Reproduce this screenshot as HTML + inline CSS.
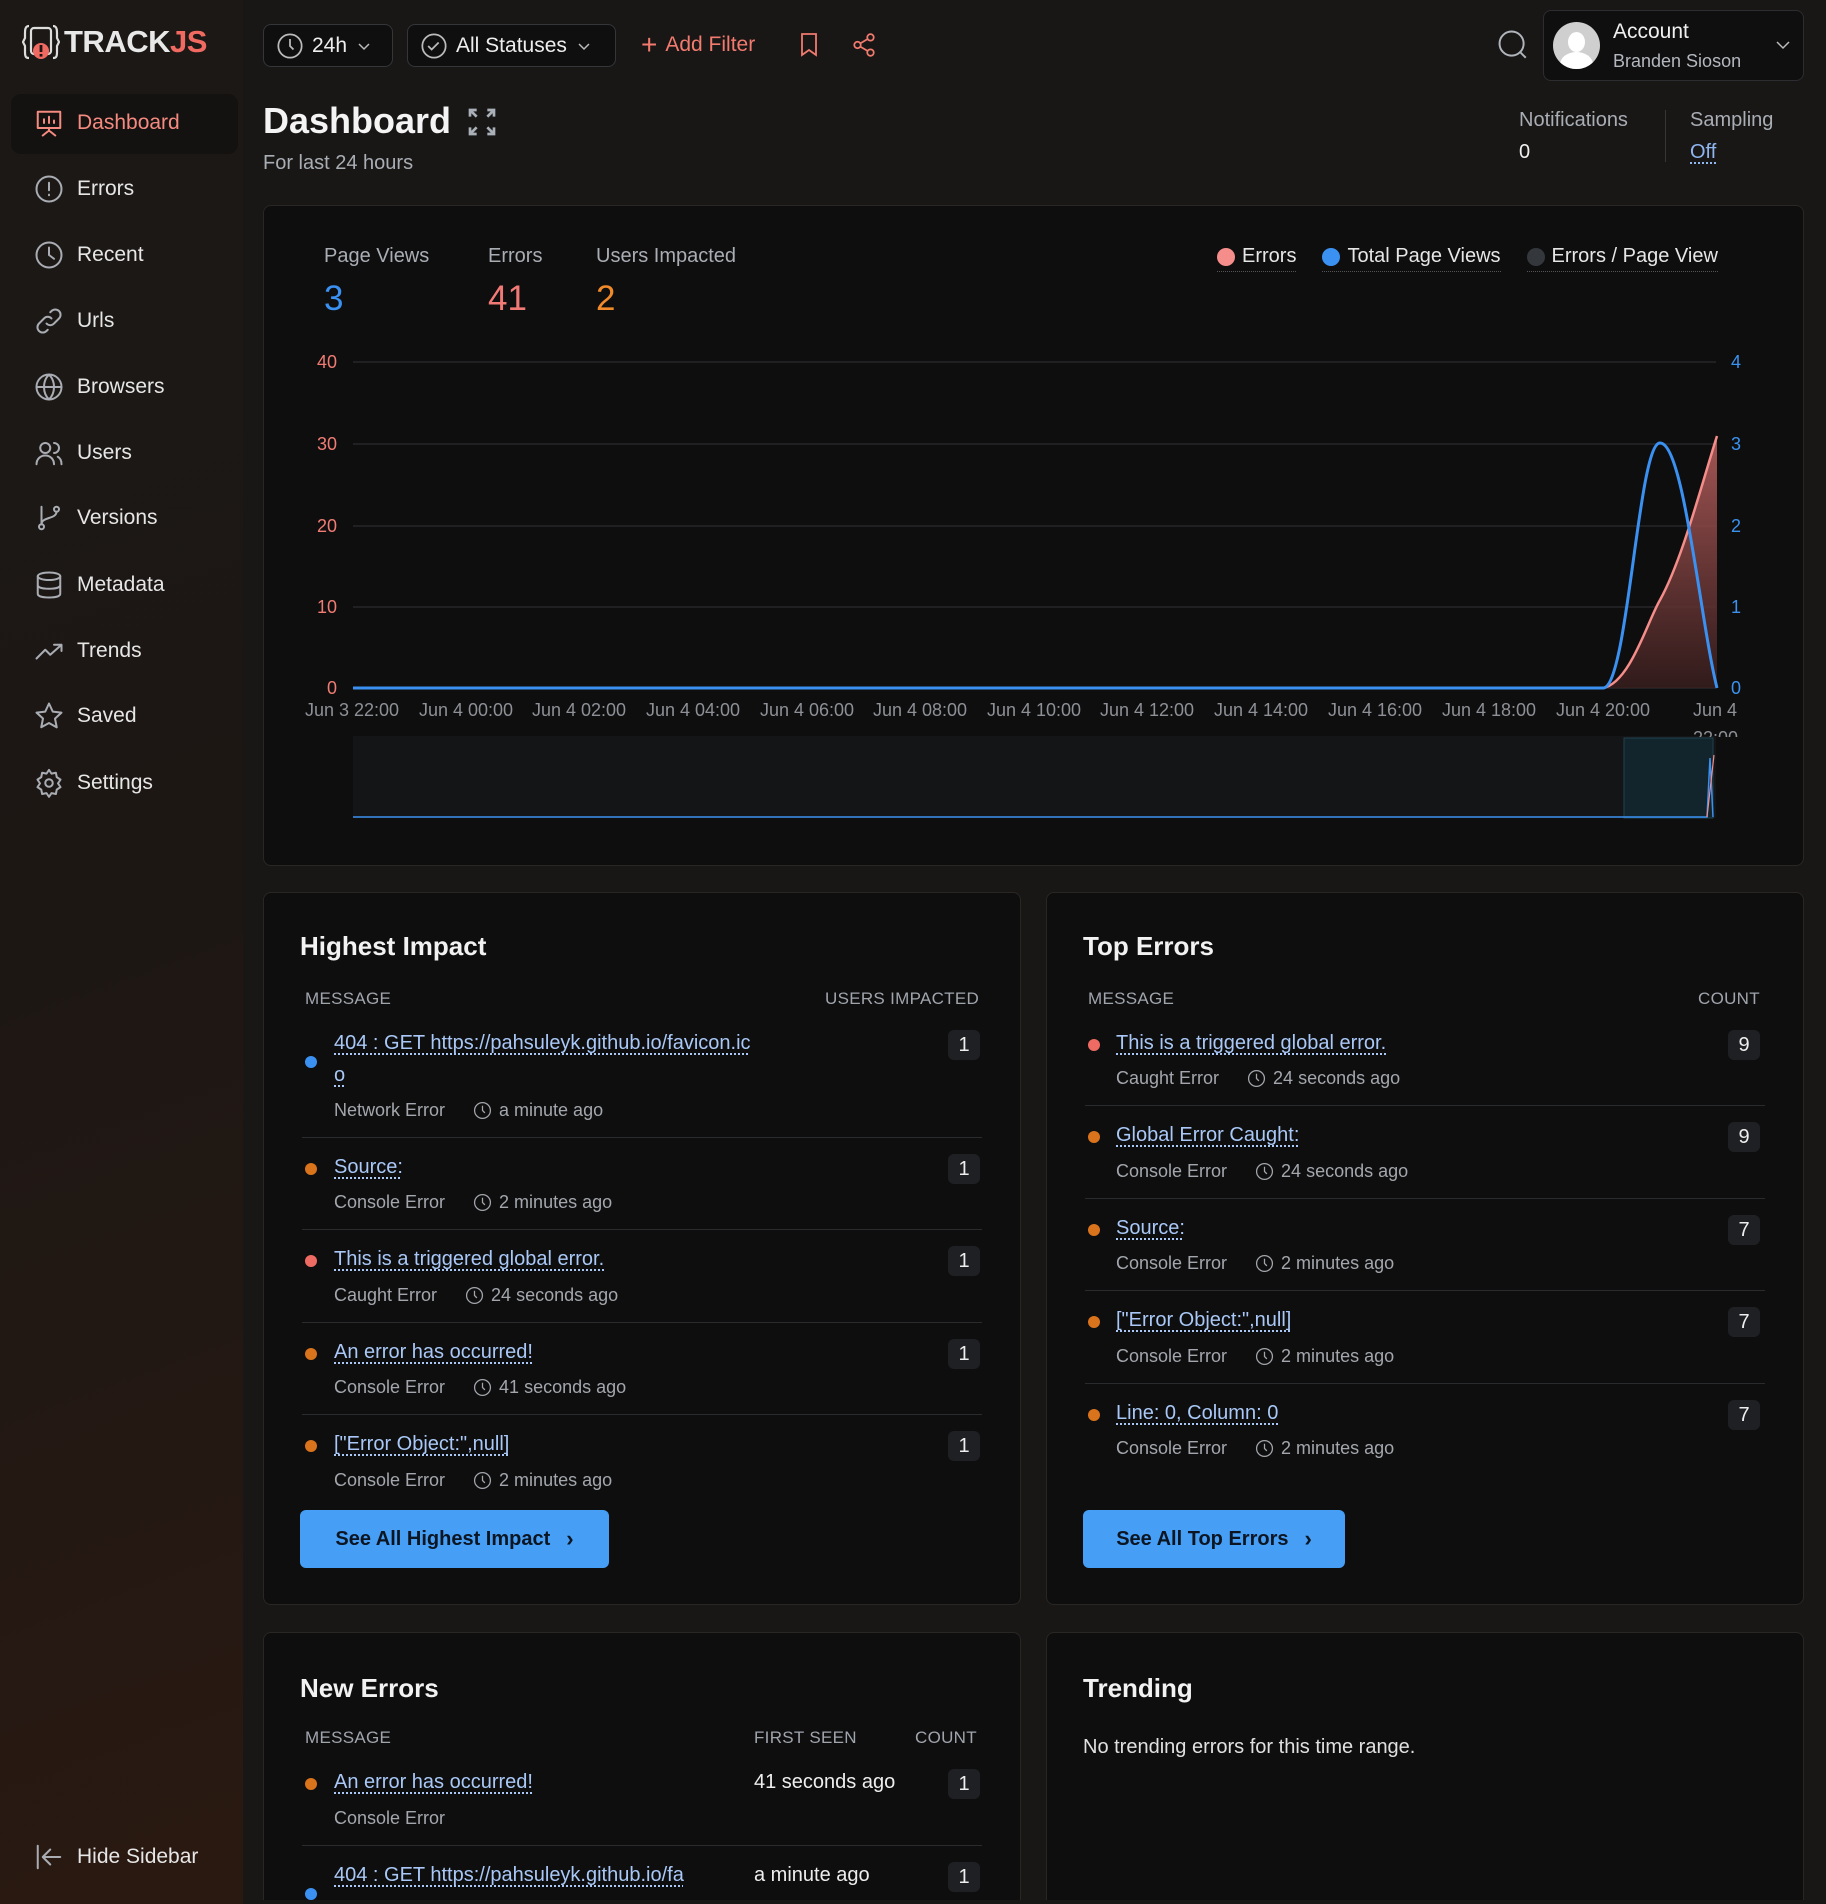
<!DOCTYPE html>
<html style="width:1826px;height:1904px;overflow:hidden"><head><meta charset="utf-8"><style>
*{box-sizing:border-box;margin:0;padding:0}
body{width:1826px;height:1904px;overflow:hidden;background:#181716;font-family:"Liberation Sans",sans-serif;color:#e8e8e8;position:relative}
.a{position:absolute}
.side{left:0;top:0;width:243px;height:1904px;background:linear-gradient(160deg,#1b1816 0%,#1d1714 50%,#2a1911 100%)}
.nav{position:absolute;left:34px;font-size:21px;color:#e6e6e6;display:flex;align-items:center;height:30px}
.nav svg{width:30px;height:30px;margin-right:13px;fill:none;stroke:#a9adb3;stroke-width:1.6;stroke-linecap:round;stroke-linejoin:round}
.btn{border:1px solid #34363a;background:#0f0f10;border-radius:8px;height:43px;display:flex;align-items:center;padding:0 12px;font-size:21px;color:#eee}
.card{background:#0e0e0e;border:1px solid #2a2623;border-radius:8px}
.h{font-size:26px;font-weight:bold;color:#f2f2f2}
.th{font-size:17px;color:#a0a5ad;letter-spacing:.3px}
.t{font-size:20px;color:#a9c8f7;text-decoration:underline dotted #a9c8f7;text-underline-offset:4px;white-space:nowrap}
.m{font-size:18px;color:#a3a7ad;white-space:nowrap;display:flex;align-items:center}
.m svg{width:19px;height:19px;margin:0 7px 0 28px;fill:none;stroke:#a3a7ad;stroke-width:1.6}
.dot{width:12px;height:12px;border-radius:50%}
.b{width:32px;height:30px;background:#1f2023;border-radius:6px;font-size:20px;color:#eee;text-align:center;line-height:30px}
.sep{height:1px;background:#2a2b2e}
.cta{background:#469ef5;color:#0c1622;font-weight:bold;font-size:20px;border-radius:6px;height:58px;display:flex;align-items:center;justify-content:center}
.yl{font-size:18px;color:#f07c74;text-align:right;width:40px}
.yr{font-size:18px;color:#3c92ef}
.xl{font-size:18px;color:#8d9096;width:120px;text-align:center;white-space:nowrap}
</style></head><body>
<div class="a side"></div>
<div class="a" style="left:22px;top:22px;display:flex;align-items:center">
<svg width="38" height="40" viewBox="0 0 38 40"><path d="M7 4 C3 4 3 8 3 12 L3 16 L1 20 L3 24 L3 30 C3 35 4 36 7 36 M31 4 C35 4 35 8 35 12 L35 16 L37 20 L35 24 L35 30 C35 35 34 36 31 36" fill="none" stroke="#ddd" stroke-width="2.2"/><rect x="9" y="6" width="20" height="26" rx="3" fill="none" stroke="#ddd" stroke-width="2.2"/><circle cx="19" cy="29" r="8" fill="#f16a62"/><rect x="17.6" y="23" width="2.8" height="7" fill="#1a1614"/><rect x="17.6" y="32" width="2.8" height="2.6" fill="#1a1614"/></svg>
<span style="font-size:31px;font-weight:bold;color:#e8e8e8;margin-left:4px;letter-spacing:-.5px">TRACK<span style="color:#f16a62">JS</span></span></div>
<div class="a" style="left:11px;top:94px;width:227px;height:60px;background:#141210;border-radius:10px"></div>
<div class="nav" style="top:108px;color:#f58a80"><svg viewBox="0 0 24 24" style="stroke:#f58a80"><rect x="3" y="3" width="18" height="13"/><path d="M8 12V9M12 12V7M16 12V10M12 16v2M7 22l5-4 5 4"/></svg>Dashboard</div>
<div class="nav" style="top:174px"><svg viewBox="0 0 24 24"><circle cx="12" cy="12" r="10"/><path d="M12 7v6M12 16.5v.5"/></svg>Errors</div>
<div class="nav" style="top:240px"><svg viewBox="0 0 24 24"><circle cx="12" cy="12" r="10"/><path d="M12 6v6l4 3"/></svg>Recent</div>
<div class="nav" style="top:306px"><svg viewBox="0 0 24 24"><path d="M10 14a4 4 0 0 0 6 0l4-4a4 4 0 0 0-6-6l-1 1M14 10a4 4 0 0 0-6 0l-4 4a4 4 0 0 0 6 6l1-1"/></svg>Urls</div>
<div class="nav" style="top:372px"><svg viewBox="0 0 24 24"><circle cx="12" cy="12" r="10"/><path d="M2 12h20M12 2c3 3 4 6 4 10s-1 7-4 10c-3-3-4-6-4-10s1-7 4-10"/></svg>Browsers</div>
<div class="nav" style="top:438px"><svg viewBox="0 0 24 24"><circle cx="9" cy="8" r="4"/><path d="M2 21c0-4 3-7 7-7s7 3 7 7M16 4a4 4 0 0 1 0 8M19 15c2 1 3 3 3 6"/></svg>Users</div>
<div class="nav" style="top:503px"><svg viewBox="0 0 24 24"><circle cx="6" cy="19" r="2"/><circle cx="18" cy="5" r="2"/><path d="M6 3v14M18 7c0 6-12 4-12 10"/></svg>Versions</div>
<div class="nav" style="top:570px"><svg viewBox="0 0 24 24"><ellipse cx="12" cy="5" rx="9" ry="3"/><path d="M3 5v14c0 2 4 3 9 3s9-1 9-3V5M3 12c0 2 4 3 9 3s9-1 9-3"/></svg>Metadata</div>
<div class="nav" style="top:636px"><svg viewBox="0 0 24 24"><path d="M2 18l7-7 4 4 9-8M16 7h6v5"/></svg>Trends</div>
<div class="nav" style="top:701px"><svg viewBox="0 0 24 24"><path d="M12 2l3 6.5 7 .8-5.2 4.8 1.4 7L12 17.6 5.8 21l1.4-7L2 9.3l7-.8z"/></svg>Saved</div>
<div class="nav" style="top:768px"><svg viewBox="0 0 24 24"><circle cx="12" cy="12" r="3"/><path d="M12 1.5l2 3 3.5-.7.7 3.5 3 2-2 3 2 3-3 2-.7 3.5-3.5-.7-2 3-2-3-3.5.7-.7-3.5-3-2 2-3-2-3 3-2 .7-3.5 3.5.7z"/></svg>Settings</div>
<div class="nav" style="top:1842px"><svg viewBox="0 0 24 24"><path d="M3 3v18M21 12H8M13 6l-6 6 6 6"/></svg>Hide Sidebar</div>

<div class="a btn" style="left:263px;top:24px;width:130px"><svg width="28" height="28" viewBox="0 0 24 24" fill="none" stroke="#bbb" stroke-width="1.5"><circle cx="12" cy="12" r="10"/><path d="M12 6v6l3 3"/></svg><span style="margin:0 10px 0 8px">24h</span><svg width="14" height="14" viewBox="0 0 14 14" fill="none" stroke="#bbb" stroke-width="1.5"><path d="M2 5l5 5 5-5"/></svg></div>
<div class="a btn" style="left:407px;top:24px;width:209px"><svg width="28" height="28" viewBox="0 0 24 24" fill="none" stroke="#bbb" stroke-width="1.5"><circle cx="12" cy="12" r="10"/><path d="M7 12l3 3 6-6"/></svg><span style="margin:0 10px 0 8px">All Statuses</span><svg width="14" height="14" viewBox="0 0 14 14" fill="none" stroke="#bbb" stroke-width="1.5"><path d="M2 5l5 5 5-5"/></svg></div>
<div class="a" style="left:641px;top:33px;font-size:21px;color:#f27a6e;display:flex;align-items:center"><span style="font-size:28px;margin-right:8px;line-height:20px">+</span>Add Filter</div>
<svg class="a" style="left:798px;top:32px" width="22" height="26" viewBox="0 0 22 26" fill="none" stroke="#f27a6e" stroke-width="1.8"><path d="M4 2h14v21l-7-5-7 5z"/></svg>
<svg class="a" style="left:851px;top:32px" width="26" height="26" viewBox="0 0 24 24" fill="none" stroke="#f27a6e" stroke-width="1.6"><circle cx="18" cy="5" r="3"/><circle cx="6" cy="12" r="3"/><circle cx="18" cy="19" r="3"/><path d="M8.6 13.5l6.8 4M15.4 6.5l-6.8 4"/></svg>
<svg class="a" style="left:1496px;top:28px" width="34" height="34" viewBox="0 0 24 24" fill="none" stroke="#b0b5bc" stroke-width="1.4"><circle cx="11" cy="11" r="8.5"/><path d="M17 17l4 4"/></svg>
<div class="a" style="left:1543px;top:10px;width:261px;height:71px;background:#0f0f10;border:1px solid #2c2d30;border-radius:8px"></div>
<div class="a" style="left:1553px;top:22px;width:47px;height:47px;border-radius:50%;background:#cfcfcf;overflow:hidden"><div class="a" style="left:15px;top:10px;width:17px;height:20px;border-radius:50%;background:#fff"></div><div class="a" style="left:7px;top:30px;width:33px;height:25px;border-radius:50% 50% 0 0;background:#fff"></div></div>
<div class="a" style="left:1613px;top:20px;font-size:21px;color:#f0f0f0">Account</div>
<div class="a" style="left:1613px;top:51px;font-size:18px;color:#b4b8be">Branden Sioson</div>
<svg class="a" style="left:1775px;top:38px" width="16" height="14" viewBox="0 0 16 14" fill="none" stroke="#bbb" stroke-width="1.5"><path d="M2 4l6 6 6-6"/></svg>

<div class="a" style="left:263px;top:100px;font-size:36px;font-weight:bold;color:#f4f4f4">Dashboard</div>
<svg class="a" style="left:466px;top:106px" width="32" height="32" viewBox="0 0 24 24" fill="none" stroke="#aab0b8" stroke-width="2"><path d="M3 8V3h5M3 3l5 5M21 8V3h-5M21 3l-5 5M3 16v5h5M3 21l5-5M21 16v5h-5M21 21l-5-5"/></svg>
<div class="a" style="left:263px;top:152px;font-size:20px;color:#a9adb4">For last 24 hours</div>
<div class="a" style="left:1519px;top:109px;font-size:20px;color:#a9adb4">Notifications</div>
<div class="a" style="left:1519px;top:141px;font-size:20px;color:#f0f0f0">0</div>
<div class="a" style="left:1665px;top:110px;width:1px;height:52px;background:#34363a"></div>
<div class="a" style="left:1690px;top:109px;font-size:20px;color:#a9adb4">Sampling</div>
<div class="a" style="left:1690px;top:141px;font-size:20px;color:#8fb6f0;text-decoration:underline dotted;text-underline-offset:4px">Off</div>

<div class="a card" style="left:263px;top:205px;width:1541px;height:661px"></div>
<div class="a" style="left:324px;top:245px;font-size:20px;color:#a9adb4">Page Views</div>
<div class="a" style="left:488px;top:245px;font-size:20px;color:#a9adb4">Errors</div>
<div class="a" style="left:596px;top:245px;font-size:20px;color:#a9adb4">Users Impacted</div>
<div class="a" style="left:324px;top:279px;font-size:35px;color:#3b91f2">3</div>
<div class="a" style="left:488px;top:279px;font-size:35px;color:#f27a76">41</div>
<div class="a" style="left:596px;top:279px;font-size:35px;color:#f08a2a">2</div>
<div class="a" style="left:1217px;top:245px;font-size:20px;color:#e6e6e6;display:flex;align-items:center;gap:26px">
<span style="display:flex;align-items:center;border-bottom:1px dotted #555;padding-bottom:3px"><span class="dot" style="width:18px;height:18px;background:#f58d8a;margin-right:7px"></span>Errors</span>
<span style="display:flex;align-items:center;border-bottom:1px dotted #555;padding-bottom:3px"><span class="dot" style="width:18px;height:18px;background:#3b91f2;margin-right:7px"></span>Total Page Views</span>
<span style="display:flex;align-items:center;border-bottom:1px dotted #555;padding-bottom:3px"><span class="dot" style="width:18px;height:18px;background:#34373c;margin-right:7px"></span>Errors / Page View</span></div>
<svg class="a" style="left:0;top:0" width="1826" height="900">
<defs><linearGradient id="g" x1="0" y1="0" x2="0" y2="1"><stop offset="0" stop-color="#b55e5c" stop-opacity=".9"/><stop offset="1" stop-color="#3a1e1e" stop-opacity=".8"/></linearGradient></defs>
<g stroke="#26272a" stroke-width="1.5"><path d="M353 362H1716M353 444H1716M353 526H1716M353 607H1716M353 688H1716"/></g>
<path d="M1603 688 C1630 683 1648 620 1660 600 C1682 560 1700 490 1717 436 L1717 688Z" fill="url(#g)"/>
<path d="M1603 688 C1630 683 1648 620 1660 600 C1682 560 1700 490 1717 436" fill="none" stroke="#f58d8a" stroke-width="2.5"/>
<path d="M353 688H1603 C1628 688 1638 443 1660 443 C1684 443 1700 620 1717 688" fill="none" stroke="#3b91f2" stroke-width="3"/>
<rect x="353" y="736" width="1363" height="82" fill="#141517"/>
<rect x="1624" y="738" width="89" height="80" fill="#12252c" stroke="#1f4150" stroke-width="1"/>
<path d="M353 817H1707 L1710 758 L1713 817" fill="none" stroke="#3b91f2" stroke-width="1.5"/>
<path d="M1707 817 L1714 755" fill="none" stroke="#f58d8a" stroke-width="1.2"/>
</svg>
<div class="a yl" style="left:297px;top:352px">40</div>
<div class="a yl" style="left:297px;top:434px">30</div>
<div class="a yl" style="left:297px;top:516px">20</div>
<div class="a yl" style="left:297px;top:597px">10</div>
<div class="a yl" style="left:297px;top:678px">0</div>
<div class="a yr" style="left:1731px;top:352px">4</div>
<div class="a yr" style="left:1731px;top:434px">3</div>
<div class="a yr" style="left:1731px;top:516px">2</div>
<div class="a yr" style="left:1731px;top:597px">1</div>
<div class="a yr" style="left:1731px;top:678px">0</div>
<div class="a xl" style="left:292px;top:700px">Jun 3 22:00</div>
<div class="a xl" style="left:406px;top:700px">Jun 4 00:00</div>
<div class="a xl" style="left:519px;top:700px">Jun 4 02:00</div>
<div class="a xl" style="left:633px;top:700px">Jun 4 04:00</div>
<div class="a xl" style="left:747px;top:700px">Jun 4 06:00</div>
<div class="a xl" style="left:860px;top:700px">Jun 4 08:00</div>
<div class="a xl" style="left:974px;top:700px">Jun 4 10:00</div>
<div class="a xl" style="left:1087px;top:700px">Jun 4 12:00</div>
<div class="a xl" style="left:1201px;top:700px">Jun 4 14:00</div>
<div class="a xl" style="left:1315px;top:700px">Jun 4 16:00</div>
<div class="a xl" style="left:1429px;top:700px">Jun 4 18:00</div>
<div class="a xl" style="left:1543px;top:700px">Jun 4 20:00</div>
<div class="a" style="left:1693px;top:700px;font-size:18px;color:#8d9096">Jun 4</div>
<div class="a" style="left:1693px;top:728px;font-size:18px;color:#8d9096;height:9px;overflow:hidden">22:00</div>

<div class="a card" style="left:263px;top:892px;width:758px;height:713px"></div>
<div class="a h" style="left:300px;top:931px">Highest Impact</div>
<div class="a th" style="left:305px;top:989px">MESSAGE</div>
<div class="a th" style="left:825px;top:989px">USERS IMPACTED</div>

<div class="a dot" style="left:305px;top:1056px;background:#3b91f2"></div>
<div class="a t" style="left:334px;top:1032px">404 : GET https://pahsuleyk.github.io/favicon.ic</div>
<div class="a t" style="left:334px;top:1064px">o</div>
<div class="a m" style="left:334px;top:1100px">Network Error<svg viewBox="0 0 24 24"><circle cx="12" cy="12" r="10"/><path d="M12 6v6l3 3"/></svg>a minute ago</div>
<div class="a b" style="left:948px;top:1030px">1</div>
<div class="a sep" style="left:302px;top:1137px;width:680px"></div>

<div class="a dot" style="left:305px;top:1163px;background:#d9731c"></div>
<div class="a t" style="left:334px;top:1156px">Source:</div>
<div class="a m" style="left:334px;top:1192px">Console Error<svg viewBox="0 0 24 24"><circle cx="12" cy="12" r="10"/><path d="M12 6v6l3 3"/></svg>2 minutes ago</div>
<div class="a b" style="left:948px;top:1154px">1</div>
<div class="a sep" style="left:302px;top:1229px;width:680px"></div>

<div class="a dot" style="left:305px;top:1255px;background:#ee6b63"></div>
<div class="a t" style="left:334px;top:1248px">This is a triggered global error.</div>
<div class="a m" style="left:334px;top:1285px">Caught Error<svg viewBox="0 0 24 24"><circle cx="12" cy="12" r="10"/><path d="M12 6v6l3 3"/></svg>24 seconds ago</div>
<div class="a b" style="left:948px;top:1246px">1</div>
<div class="a sep" style="left:302px;top:1322px;width:680px"></div>

<div class="a dot" style="left:305px;top:1348px;background:#d9731c"></div>
<div class="a t" style="left:334px;top:1341px">An error has occurred!</div>
<div class="a m" style="left:334px;top:1377px">Console Error<svg viewBox="0 0 24 24"><circle cx="12" cy="12" r="10"/><path d="M12 6v6l3 3"/></svg>41 seconds ago</div>
<div class="a b" style="left:948px;top:1339px">1</div>
<div class="a sep" style="left:302px;top:1414px;width:680px"></div>

<div class="a dot" style="left:305px;top:1440px;background:#d9731c"></div>
<div class="a t" style="left:334px;top:1433px">["Error Object:",null]</div>
<div class="a m" style="left:334px;top:1470px">Console Error<svg viewBox="0 0 24 24"><circle cx="12" cy="12" r="10"/><path d="M12 6v6l3 3"/></svg>2 minutes ago</div>
<div class="a b" style="left:948px;top:1431px">1</div>
<div class="a cta" style="left:300px;top:1510px;width:309px">See All Highest Impact<span style="margin-left:16px;font-size:22px">›</span></div>

<div class="a card" style="left:1046px;top:892px;width:758px;height:713px"></div>
<div class="a h" style="left:1083px;top:931px">Top Errors</div>
<div class="a th" style="left:1088px;top:989px">MESSAGE</div>
<div class="a th" style="left:1698px;top:989px">COUNT</div>

<div class="a dot" style="left:1088px;top:1039px;background:#ee6b63"></div>
<div class="a t" style="left:1116px;top:1032px">This is a triggered global error.</div>
<div class="a m" style="left:1116px;top:1068px">Caught Error<svg viewBox="0 0 24 24"><circle cx="12" cy="12" r="10"/><path d="M12 6v6l3 3"/></svg>24 seconds ago</div>
<div class="a b" style="left:1728px;top:1030px">9</div>
<div class="a sep" style="left:1085px;top:1105px;width:680px"></div>

<div class="a dot" style="left:1088px;top:1131px;background:#d9731c"></div>
<div class="a t" style="left:1116px;top:1124px">Global Error Caught:</div>
<div class="a m" style="left:1116px;top:1161px">Console Error<svg viewBox="0 0 24 24"><circle cx="12" cy="12" r="10"/><path d="M12 6v6l3 3"/></svg>24 seconds ago</div>
<div class="a b" style="left:1728px;top:1122px">9</div>
<div class="a sep" style="left:1085px;top:1198px;width:680px"></div>

<div class="a dot" style="left:1088px;top:1224px;background:#d9731c"></div>
<div class="a t" style="left:1116px;top:1217px">Source:</div>
<div class="a m" style="left:1116px;top:1253px">Console Error<svg viewBox="0 0 24 24"><circle cx="12" cy="12" r="10"/><path d="M12 6v6l3 3"/></svg>2 minutes ago</div>
<div class="a b" style="left:1728px;top:1215px">7</div>
<div class="a sep" style="left:1085px;top:1290px;width:680px"></div>

<div class="a dot" style="left:1088px;top:1316px;background:#d9731c"></div>
<div class="a t" style="left:1116px;top:1309px">["Error Object:",null]</div>
<div class="a m" style="left:1116px;top:1346px">Console Error<svg viewBox="0 0 24 24"><circle cx="12" cy="12" r="10"/><path d="M12 6v6l3 3"/></svg>2 minutes ago</div>
<div class="a b" style="left:1728px;top:1307px">7</div>
<div class="a sep" style="left:1085px;top:1383px;width:680px"></div>

<div class="a dot" style="left:1088px;top:1409px;background:#d9731c"></div>
<div class="a t" style="left:1116px;top:1402px">Line: 0, Column: 0</div>
<div class="a m" style="left:1116px;top:1438px">Console Error<svg viewBox="0 0 24 24"><circle cx="12" cy="12" r="10"/><path d="M12 6v6l3 3"/></svg>2 minutes ago</div>
<div class="a b" style="left:1728px;top:1400px">7</div>
<div class="a cta" style="left:1083px;top:1510px;width:262px">See All Top Errors<span style="margin-left:16px;font-size:22px">›</span></div>

<div class="a card" style="left:263px;top:1632px;width:758px;height:268px;border-bottom:none;border-radius:8px 8px 0 0"></div>
<div class="a h" style="left:300px;top:1673px">New Errors</div>
<div class="a th" style="left:305px;top:1728px">MESSAGE</div>
<div class="a th" style="left:754px;top:1728px">FIRST SEEN</div>
<div class="a th" style="left:915px;top:1728px">COUNT</div>
<div class="a dot" style="left:305px;top:1778px;background:#d9731c"></div>
<div class="a t" style="left:334px;top:1771px">An error has occurred!</div>
<div class="a" style="left:754px;top:1771px;font-size:20px;color:#eee">41 seconds ago</div>
<div class="a m" style="left:334px;top:1808px">Console Error</div>
<div class="a b" style="left:948px;top:1769px">1</div>
<div class="a sep" style="left:302px;top:1845px;width:680px"></div>
<div class="a dot" style="left:305px;top:1888px;background:#3b91f2"></div>
<div class="a t" style="left:334px;top:1864px">404 : GET https://pahsuleyk.github.io/fa</div>
<div class="a" style="left:754px;top:1864px;font-size:20px;color:#eee">a minute ago</div>
<div class="a b" style="left:948px;top:1862px">1</div>

<div class="a card" style="left:1046px;top:1632px;width:758px;height:268px;border-bottom:none;border-radius:8px 8px 0 0"></div>
<div class="a h" style="left:1083px;top:1673px">Trending</div>
<div class="a" style="left:1083px;top:1736px;font-size:20px;color:#e0e0e0">No trending errors for this time range.</div>
</body></html>
